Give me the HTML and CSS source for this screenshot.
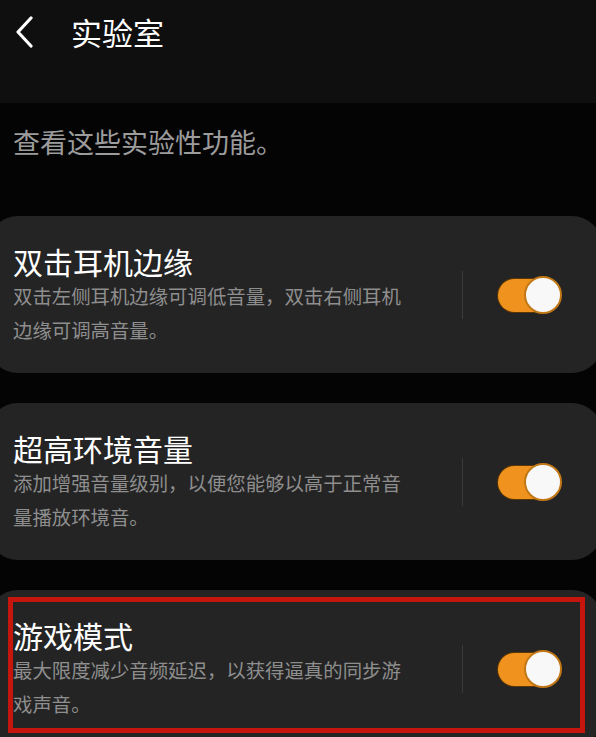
FILE: index.html
```html
<!DOCTYPE html>
<html lang="zh-CN">
<head>
<meta charset="utf-8">
<title>实验室</title>
<link rel="stylesheet" href="styles.css">
</head>
<body>
<header class="appbar">
  <svg class="back" width="20" height="32" viewBox="0 0 20 32"><path d="M16 2 L3 16 L16 30" fill="none" stroke="#ffffff" stroke-width="3.2" stroke-linecap="round" stroke-linejoin="round"/></svg>
  <h1 class="title">实验室</h1>
</header>
<p class="intro">查看这些实验性功能。</p>
<div class="cards">
  <div class="card">
    <div class="text">
      <div class="name">双击耳机边缘</div>
      <div class="desc">双击左侧耳机边缘可调低音量，双击右侧耳机边缘可调高音量。</div>
    </div>
    <div class="divider"></div>
    <div class="toggle"><span class="track"></span><span class="knob"></span></div>
  </div>
  <div class="card">
    <div class="text">
      <div class="name">超高环境音量</div>
      <div class="desc">添加增强音量级别，以便您能够以高于正常音量播放环境音。</div>
    </div>
    <div class="divider"></div>
    <div class="toggle"><span class="track"></span><span class="knob"></span></div>
  </div>
  <div class="card highlighted">
    <div class="text">
      <div class="name">游戏模式</div>
      <div class="desc">最大限度减少音频延迟，以获得逼真的同步游戏声音。</div>
    </div>
    <div class="divider"></div>
    <div class="toggle"><span class="track"></span><span class="knob"></span></div>
    <div class="mark"></div>
  </div>
</div>
</body>
</html>
```
FILE: styles.css
```css
html, body {
  margin: 0;
  padding: 0;
  background: #040404;
  overflow: hidden;
  font-family: "Noto Sans CJK SC", "Noto Sans", sans-serif;
}
.appbar {
  height: 103px;
  background: #0f0f0f;
  display: flex;
  align-items: flex-start;
}
.back {
  margin: 16px 0 0 15px;
  flex: 0 0 auto;
}
.title {
  margin: 12px 0 0 36px;
  font-size: 31px;
  line-height: 40px;
  font-weight: 400;
  color: #ffffff;
}
.intro {
  margin: 22px 0 0 13px;
  font-size: 27px;
  line-height: 34px;
  color: #9c9c9c;
}
.cards {
  margin: 57px -6px 0 -12px;
  display: flex;
  flex-direction: column;
  gap: 30px;
}
.card {
  position: relative;
  height: 157px;
  box-sizing: border-box;
  background: #242424;
  border-radius: 30px;
  display: flex;
  align-items: center;
  padding-left: 25px;
}
.text {
  flex: 0 0 398px;
}
.name {
  font-size: 30px;
  line-height: 36px;
  color: #ffffff;
}
.desc {
  font-size: 19.4px;
  line-height: 34px;
  color: #8e8e8e;
}
.divider {
  width: 1px;
  height: 48px;
  background: #3a3a3a;
  margin-left: 51px;
}
.toggle {
  position: relative;
  width: 64px;
  height: 38px;
  margin-left: 35px;
}
.track {
  position: absolute;
  left: 0;
  top: 3px;
  width: 62px;
  height: 33px;
  border-radius: 17px;
  background: #f0931e;
  box-shadow: 0 0 0 1px #5a3608;
}
.knob {
  position: absolute;
  right: 0;
  top: 0;
  width: 38px;
  height: 38px;
  box-sizing: border-box;
  border-radius: 50%;
  background: #f8f8f8;
  border: 2px solid #c27716;
}
.mark {
  position: absolute;
  left: 20px;
  top: 7px;
  width: 577px;
  height: 136px;
  box-sizing: border-box;
  border: 5px solid #c4160c;
}
```
